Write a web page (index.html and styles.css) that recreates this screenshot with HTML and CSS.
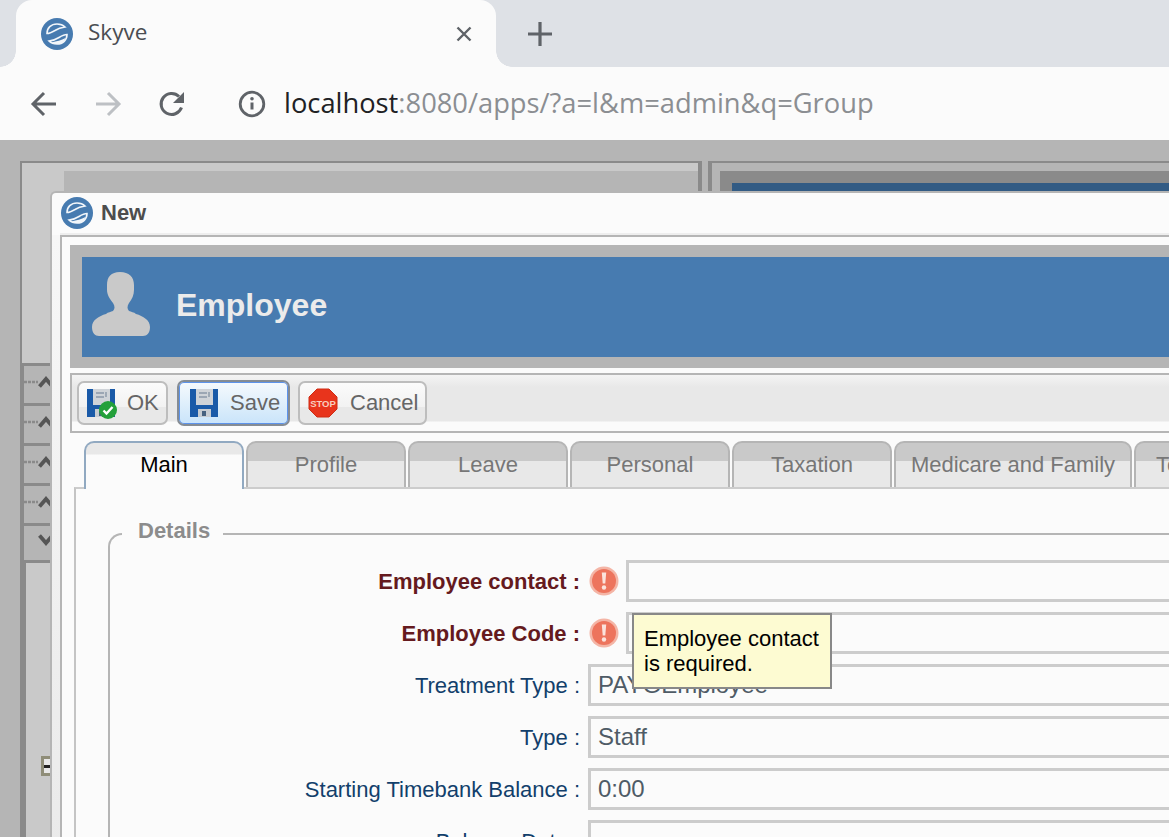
FILE: index.html
```html
<!DOCTYPE html>
<html>
<head>
	<meta charset="utf-8">
	<title>Skyve</title>
	<link rel="stylesheet" href="styles.css">
</head>
<body>
	<svg class="defs" width="0" height="0">
		<symbol id="logo" viewBox="0 0 32 32">
			<circle cx="16" cy="16" r="16" fill="#477bb0"/>
			<path d="M6 15.500C6 10 10 6 16 6c3.500 0 6 1 8 3-4 .5-7 1.500-10 3.500-2.500 1.500-5 3-8 3z" fill="none" stroke="#f2f6fa" stroke-width="1.600"/>
			<path d="M26 16.500C26 22 22 26 16 26c-3.500 0-6-1-8-3 4-.5 7-1.500 10-3.500 2.500-1.500 5-3 8-3z" fill="none" stroke="#f2f6fa" stroke-width="1.600"/>
			<path d="M10.500 24.500c5-1.500 10-2 14-4.500-1.500 4-5 6-8.500 6-2 0-4-.5-5.500-1.500z" fill="#f2f6fa"/>
		</symbol>
		<symbol id="floppy" viewBox="0 0 30 30">
			<rect x="1" y="1" width="28" height="28" fill="#1a5aa8"/>
			<rect x="7" y="1" width="17" height="16" fill="#cfd3d8"/>
			<path d="M10 5h8M10 9h8M20 4v5" stroke="#8a98a8" stroke-width="1.400" fill="none"/>
			<rect x="9" y="21" width="13" height="8" fill="#c7ccd2"/>
			<rect x="13" y="23" width="4" height="5" fill="#46617f"/>
		</symbol>
		<symbol id="alert" viewBox="0 0 30 30">
			<circle cx="15" cy="15" r="14.500" fill="#f4b5a6"/>
			<circle cx="15" cy="15" r="12" fill="#ed745d"/>
			<path d="M12.800 6.500h4.400l-.9 11h-2.600z" fill="#fbe3dc"/>
			<circle cx="15" cy="21.500" r="2.200" fill="#fbe3dc"/>
		</symbol>
		<symbol id="chev" viewBox="0 0 16 12">
			<path d="M1.500 10.500L8 3l6.500 7.500" fill="none" stroke="#555" stroke-width="3.800"/>
		</symbol>
		<symbol id="wave" viewBox="0 0 14 6">
			<path d="M0 3h14" stroke="#8a8a8a" stroke-width="2.400" stroke-dasharray="3 1"/>
		</symbol>
	</svg>

	<div class="tabstrip">
		<div class="tab">
			<svg class="logo"><use href="#logo"/></svg>
			<span class="tab-title">Skyve</span>
			<svg class="tab-close" viewBox="0 0 16 16"><path d="M1.500 1.500l13 13M14.500 1.500l-13 13" stroke="#5f6368" stroke-width="2.400"/></svg>
		</div>
		<svg class="newtab" viewBox="0 0 24 24"><path d="M12 0v24M0 12h24" stroke="#5f6368" stroke-width="3.200"/></svg>
	</div>

	<div class="toolbar">
		<svg class="nav" viewBox="0 0 28 28"><path d="M26 14H4M14 3L3 14l11 11" fill="none" stroke="#5f6368" stroke-width="3"/></svg>
		<svg class="nav nav-off" viewBox="0 0 28 28"><path d="M2 14h22M14 3l11 11-11 11" fill="none" stroke="#bdc0c4" stroke-width="3"/></svg>
		<svg class="nav nav-reload" viewBox="0 0 28 28"><path d="M23.500 17.500A10.500 10.500 0 1 1 21 6.500" fill="none" stroke="#5f6368" stroke-width="3"/><path d="M26 2v11H15z" fill="#5f6368"/></svg>
		<svg class="info" viewBox="0 0 28 28"><circle cx="14" cy="14" r="11.800" fill="none" stroke="#5f6368" stroke-width="2.800"/><path d="M14 12.500v7" stroke="#5f6368" stroke-width="3"/><circle cx="14" cy="8.800" r="1.800" fill="#5f6368"/></svg>
		<div class="address">localhost<span class="address-rest">:8080/apps/?a=l&amp;m=admin&amp;q=Group</span></div>
	</div>

	<div class="desktop">
		<div class="bgwin bgwin-left">
			<div class="bgwin-bar"></div>
			<div class="rail">
				<div class="rail-row"><svg class="wave"><use href="#wave"/></svg><svg class="chev"><use href="#chev"/></svg></div>
				<div class="rail-row"><svg class="wave"><use href="#wave"/></svg><svg class="chev"><use href="#chev"/></svg></div>
				<div class="rail-row"><svg class="wave"><use href="#wave"/></svg><svg class="chev"><use href="#chev"/></svg></div>
				<div class="rail-row"><svg class="wave"><use href="#wave"/></svg><svg class="chev"><use href="#chev"/></svg></div>
				<div class="rail-row"><svg class="chev chev-down"><use href="#chev"/></svg></div>
			</div>
			<div class="rail-rest"><span class="expander"></span></div>
		</div>

		<div class="bgwin bgwin-right">
			<div class="bgwin-right-inner"><div class="bgwin-right-blue"></div></div>
		</div>

		<div class="modal">
			<div class="modal-title">
				<svg class="logo"><use href="#logo"/></svg>
				<b>New</b>
			</div>
			<div class="modal-body">
				<div class="panel">
					<div class="banner-wrap">
						<div class="banner">
							<svg class="person" viewBox="0 0 58 64"><path d="M28 0c9 0 14 5 14 13v5c0 5-2 9-5 13-2 3-2 6 0 8 2 1 5 1 7 3 7 2 14 6 14 13 0 6-3 9-7 9H7c-4 0-7-3-7-9 0-7 7-11 14-13 2-2 5-2 7-3 2-2 2-5 0-8-3-4-6-8-6-13v-5C15 5 19 0 28 0z" fill="#c9c9c9"/></svg>
							<span class="banner-title">Employee</span>
						</div>
					</div>

					<div class="buttons">
						<div class="btn btn-ok">
							<span class="btn-icon">
								<svg class="floppy"><use href="#floppy"/></svg>
								<svg class="tick" viewBox="0 0 18 18"><circle cx="9" cy="9" r="9" fill="#23a03a"/><path d="M4.500 9.500l3 3 6-6.500" fill="none" stroke="#fff" stroke-width="2.400"/></svg>
							</span>
							OK
						</div>
						<div class="btn btn-save">
							<span class="btn-icon"><svg class="floppy"><use href="#floppy"/></svg></span>
							Save
						</div>
						<div class="btn btn-cancel">
							<svg class="stop" viewBox="0 0 30 30"><path d="M9 1h12l8 8v12l-8 8H9l-8-8V9z" fill="#e8341c" stroke="#cf2c14"/><text x="15" y="18.500" text-anchor="middle" class="stop-text">STOP</text></svg>
							Cancel
						</div>
					</div>

					<div class="tabs">
						<div class="ftab ftab-on">Main</div>
						<div class="ftab">Profile</div>
						<div class="ftab">Leave</div>
						<div class="ftab">Personal</div>
						<div class="ftab">Taxation</div>
						<div class="ftab ftab-wide">Medicare and Family</div>
						<div class="ftab ftab-last">Te</div>
					</div>

					<div class="pane">
						<fieldset class="details">
							<legend>Details</legend>
							<div class="row">
								<label class="req">Employee contact :</label>
								<svg class="alert"><use href="#alert"/></svg>
								<div class="field"></div>
							</div>
							<div class="row">
								<label class="req">Employee Code :</label>
								<svg class="alert"><use href="#alert"/></svg>
								<div class="field"></div>
							</div>
							<div class="row">
								<label>Treatment Type :</label>
								<div class="field">PAYGEmployee</div>
							</div>
							<div class="row">
								<label>Type :</label>
								<div class="field">Staff</div>
							</div>
							<div class="row">
								<label>Starting Timebank Balance :</label>
								<div class="field">0:00</div>
							</div>
							<div class="row">
								<label>Balance Date :</label>
								<div class="field"></div>
							</div>
						</fieldset>
					</div>
				</div>
			</div>
		</div>

		<div class="tooltip">Employee contact<br>is required.</div>
	</div>
</body>
</html>
```

FILE: styles.css
```css
html, body {
  margin: 0;
  height: 837px;
  overflow: hidden;
}
body {
  font-family: "Liberation Sans", Arial, sans-serif;
  background: #fbfbfb;
}
.defs {
  position: absolute;
}

/* browser chrome */
.tabstrip {
  height: 67px;
  background: #dee1e6;
  display: flex;
  align-items: center;
}
.tab {
  position: relative;
  width: 480px;
  height: 67px;
  margin-left: 16px;
  background: #fbfbfb;
  border-radius: 16px 16px 0 0;
  display: flex;
  align-items: center;
  padding: 0 24px 0 25px;
  box-sizing: border-box;
}
.tab::before, .tab::after {
  content: "";
  position: absolute;
  bottom: 0;
  width: 16px;
  height: 16px;
  background: radial-gradient(circle at 0 0, #dee1e6 15.500px, #fbfbfb 16px);
}
.tab::before {
  left: -16px;
}
.tab::after {
  right: -16px;
  transform: scaleX(-1);
}
.logo {
  width: 32px;
  height: 32px;
  flex: none;
}
.tab-title {
  margin: 0 0 4px 15px;
  font-family: "Open Sans", sans-serif;
  font-size: 22.500px;
  color: #4a4d52;
}
.tab-close {
  width: 16px;
  height: 16px;
  margin-left: auto;
}
.newtab {
  width: 24px;
  height: 24px;
  margin-left: 32px;
}
.toolbar {
  height: 73px;
  background: #fbfbfb;
  display: flex;
  align-items: center;
  padding-left: 30px;
}
.nav {
  width: 28px;
  height: 28px;
  margin-right: 36px;
}
.nav-reload {
  margin-right: 52px;
}
.info {
  width: 28px;
  height: 28px;
  margin-right: 18px;
}
.address {
  font-family: "Open Sans", sans-serif;
  font-size: 27.300px;
  color: #202124;
  white-space: nowrap;
  margin-bottom: 2px;
}
.address-rest {
  color: #8b8e92;
}

/* app behind the dialog */
.desktop {
  position: relative;
  height: 697px;
  background: #b5b5b5;
  overflow: hidden;
}
.bgwin {
  position: absolute;
  top: 21px;
  bottom: 0;
  box-sizing: border-box;
  border-top: 2px solid #8a8a8a;
}
.bgwin-left {
  left: 20px;
  width: 682px;
  border-left: 2px solid #8a8a8a;
  border-right: 4px solid #8a8a8a;
  background: #c9c9c9;
  display: flex;
  flex-direction: column;
}
.bgwin-bar {
  height: 184px;
  flex: none;
  margin-top: 8px;
  margin-left: 42px;
  background: #b5b5b5;
}
.rail {
  width: 28px;
  margin-top: 8px;
  border-left: 2px solid #8a8a8a;
}
.rail-row {
  height: 31px;
  border-top: 3px solid #8a8a8a;
  background: #b5b5b5;
  display: flex;
  align-items: center;
  overflow: hidden;
  padding-bottom: 6px;
}
.rail-row:last-child {
  border-bottom: 3px solid #8a8a8a;
  height: 28px;
  padding-left: 14px;
}
.wave {
  width: 14px;
  height: 6px;
  flex: none;
}
.chev {
  width: 16px;
  height: 12px;
  flex: none;
}
.chev-down {
  transform: scaleY(-1);
}
.rail-rest {
  flex: 1;
  border-left: 4px solid #8a8a8a;
  position: relative;
}
.expander {
  position: absolute;
  left: 15px;
  top: 193px;
  width: 9px;
  height: 20px;
  box-sizing: border-box;
  border: 3px solid #8f8d78;
  border-right: 0;
  background: linear-gradient(#e8e8e8 6px, #222 6px, #222 9px, #e8e8e8 9px);
}
.bgwin-right {
  left: 708px;
  right: 0;
  border-left: 4px solid #8a8a8a;
  padding: 8px 0 0 8px;
}
.bgwin-right-inner {
  height: 100%;
  background: #8a8a8a;
  padding: 12px 0 0 12px;
  box-sizing: border-box;
}
.bgwin-right-blue {
  height: 100%;
  background: #325b84;
}

/* dialog */
.modal {
  position: absolute;
  left: 50px;
  top: 51px;
  width: 1300px;
  height: 760px;
  box-sizing: border-box;
  background: #fbfbfb;
  border: 2px solid #b5b5b5;
  border-right: 0;
  border-bottom: 0;
  border-radius: 6px 0 0 0;
}
.modal-title {
  height: 42px;
  box-sizing: border-box;
  display: flex;
  align-items: center;
  padding: 0 0 3px 9px;
  font-size: 22px;
  color: #4d4d4d;
}
.modal-title b {
  margin-left: 8px;
}
.modal-body {
  padding-left: 8px;
  background: linear-gradient(#f7f7f7, #e8e8e8);
  height: 718px;
}
.panel {
  height: 100%;
  box-sizing: border-box;
  background: #fbfbfb;
  border-left: 2px solid #b5b5b5;
  border-top: 2px solid #b5b5b5;
  box-shadow: 0 -2px 0 #eee;
  padding: 8px 0 0 8px;
}
.banner-wrap {
  background: #b5b5b5;
  padding: 12px 0 11px 12px;
}
.banner {
  height: 100px;
  background: #477bb0;
  display: flex;
  align-items: center;
  padding-left: 10px;
}
.person {
  width: 58px;
  height: 64px;
  flex: none;
  margin-bottom: 6px;
}
.banner-title {
  margin: 0 0 4px 26px;
  font-size: 32px;
  font-weight: bold;
  color: #ebebeb;
}

/* button row */
.buttons {
  margin-top: 5px;
  height: 60px;
  box-sizing: border-box;
  border: 2px solid #b5b5b5;
  border-right: 0;
  background: linear-gradient(#f4f4f4, #e8e8e8 12px, #e8e8e8 46px, #fbfbfb 47px);
  display: flex;
  align-items: center;
  padding-left: 5px;
}
.btn {
  height: 44px;
  box-sizing: border-box;
  border: 2px solid #bdbdbd;
  border-radius: 7px;
  background: linear-gradient(#fbfbfb, #f2f2f2 60%, #e8e8e8 61%);
  display: flex;
  align-items: center;
  font-size: 22px;
  color: #666;
  margin-right: 9px;
}
.btn-ok {
  width: 91px;
  padding-left: 7px;
}
.btn-save {
  width: 113px;
  height: 46px;
  padding-left: 10px;
  margin-right: 8px;
  border-color: #858c94;
  background: linear-gradient(#f6fafd, #c9e4fa);
  box-shadow: 0 0 0 1px #5c93ec inset;
}
.btn-cancel {
  width: 129px;
  padding-left: 8px;
}
.btn-icon {
  position: relative;
  width: 30px;
  height: 30px;
  margin-right: 11px;
  flex: none;
}
.floppy {
  width: 30px;
  height: 30px;
  display: block;
}
.tick {
  position: absolute;
  right: -1px;
  bottom: -1px;
  width: 18px;
  height: 18px;
}
.stop {
  width: 30px;
  height: 30px;
  flex: none;
  margin-right: 12px;
}
.stop-text {
  font-size: 9.500px;
  font-weight: bold;
  fill: #f8cdbf;
}

/* form tabs */
.tabs {
  display: flex;
  gap: 2px;
  margin-top: 8px;
  padding-left: 14px;
  height: 46px;
}
.ftab {
  width: 160px;
  flex: none;
  box-sizing: border-box;
  border: 2px solid #b5b5b5;
  border-bottom: 0;
  border-radius: 10px 10px 0 0;
  background: linear-gradient(#c9c9c9 18px, #e8e8e8 18px);
  font-size: 22px;
  color: #777;
  text-align: center;
  line-height: 44px;
  white-space: nowrap;
}
.ftab-wide {
  width: 238px;
}
.ftab-last {
  text-align: left;
  padding-left: 20px;
}
.ftab-on {
  position: relative;
  z-index: 1;
  height: 48px;
  border-color: #91a9c1;
  background: linear-gradient(#e8e8e8 11px, #fbfbfb 12px);
  color: #000;
}
.pane {
  margin-left: 4px;
  border-top: 2px solid #ccc;
  border-left: 2px solid #c4c4c4;
  height: 500px;
  padding: 29px 0 0 32px;
}
.details {
  margin: 0;
  padding: 10px 0 0;
  border: 0;
  border-top: 2px solid #b5b5b5;
  border-left: 2px solid #b5b5b5;
  border-radius: 14px 0 0 0;
}
.details legend {
  margin-left: 12px;
  padding: 0 13px 6px 16px;
  font-size: 22px;
  font-weight: bold;
  color: #8c8c8c;
}
.row {
  display: flex;
  align-items: center;
  height: 42px;
  margin-bottom: 10px;
}
.row label {
  width: 470px;
  flex: none;
  text-align: right;
  margin-right: 8px;
  padding-top: 2px;
  font-size: 22px;
  color: #123f6b;
}
.row .req {
  font-weight: bold;
  color: #651a1e;
}
.alert {
  width: 30px;
  height: 30px;
  flex: none;
  margin: 0 7px 0 1px;
}
.field {
  flex: 1;
  height: 100%;
  box-sizing: border-box;
  border: 3px solid #ccc;
  border-right: 0;
  padding-left: 7px;
  font-size: 24px;
  line-height: 36px;
  color: #4f5b66;
}
.tooltip {
  position: absolute;
  left: 632px;
  top: 473px;
  width: 200px;
  height: 76px;
  box-sizing: border-box;
  border: 2px solid #888;
  background: #fdfbd2;
  padding: 11px 0 0 10px;
  font-size: 22px;
  line-height: 25px;
  color: #000;
  white-space: nowrap;
}
```
